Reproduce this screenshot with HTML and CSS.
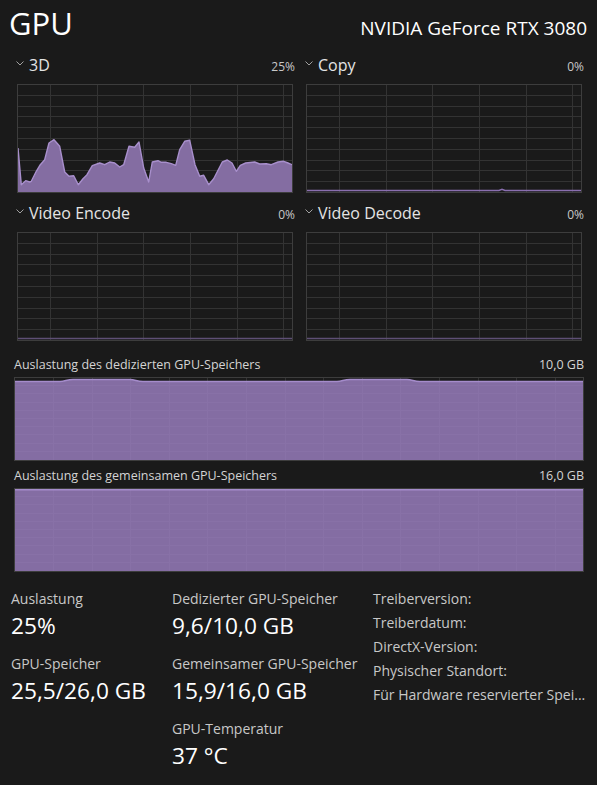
FILE: index.html
```html
<!DOCTYPE html>
<html lang="de">
<head>
<meta charset="utf-8">
<title>GPU</title>
<link rel="stylesheet" href="styles.css">
</head>
<body>
<div class="page">
  <header class="top">
    <h1 class="title">GPU</h1>
    <div class="model">NVIDIA GeForce RTX 3080</div>
  </header>

  <section class="engines">
    <div class="panel">
      <div class="phead">
        <span class="pname"><svg class="chev" width="8" height="5" viewBox="0 0 8 5"><polyline points="0.5,0.5 4,4 7.5,0.5"/></svg>3D</span>
        <span class="pval">25%</span>
      </div>
      <div class="graph">
        <svg class="gsvg">
          <g class="grid">
            <line x1="0" x2="100%" y1="10.5" y2="10.5"/><line x1="0" x2="100%" y1="21.5" y2="21.5"/><line x1="0" x2="100%" y1="31.5" y2="31.5"/><line x1="0" x2="100%" y1="42.5" y2="42.5"/><line x1="0" x2="100%" y1="53.5" y2="53.5"/><line x1="0" x2="100%" y1="64.5" y2="64.5"/><line x1="0" x2="100%" y1="75.5" y2="75.5"/><line x1="0" x2="100%" y1="85.5" y2="85.5"/><line x1="0" x2="100%" y1="96.5" y2="96.5"/>
            <line y1="0" y2="100%" x1="32.5" x2="32.5"/><line y1="0" y2="100%" x1="79.5" x2="79.5"/><line y1="0" y2="100%" x1="125.5" x2="125.5"/><line y1="0" y2="100%" x1="172.5" x2="172.5"/><line y1="0" y2="100%" x1="219.5" x2="219.5"/><line y1="0" y2="100%" x1="265.5" x2="265.5"/>
          </g>
          <path class="area" d="M0,107 L0,63 L3.3,99.7 L7.7,95.7 L11.7,97 L13.3,96.3 L18.3,86.3 L22.3,79.7 L26.7,74.7 L31,58 L36,54.7 L41.7,61.3 L46.7,87 L51,91.3 L55.7,90.7 L60.3,99.7 L65,93.7 L69,89.7 L74.3,80.7 L81.7,78 L86.7,79.7 L91.7,77 L96.7,78 L101.7,82 L105.7,79.7 L111,61.3 L116.7,62.3 L121,57 L125.7,83 L130.7,97 L134.3,77 L140,75.7 L143.3,77.3 L148.3,77.3 L153.3,78.7 L157.7,80.3 L161.7,64.7 L166.7,56.3 L171.7,55.3 L177,79.7 L181.7,91.3 L185.7,90.3 L190.7,99.7 L195.7,93.7 L204.3,77 L209.3,75 L214,78 L218.3,86.3 L222.3,80.3 L227.7,78 L236.7,77 L241.7,79 L248.3,78.7 L253.3,79.7 L260,77 L265.7,76.3 L270,78 L274,79.7 L274,107 Z"/>
          <path class="line" d="M0,63 L3.3,99.7 L7.7,95.7 L11.7,97 L13.3,96.3 L18.3,86.3 L22.3,79.7 L26.7,74.7 L31,58 L36,54.7 L41.7,61.3 L46.7,87 L51,91.3 L55.7,90.7 L60.3,99.7 L65,93.7 L69,89.7 L74.3,80.7 L81.7,78 L86.7,79.7 L91.7,77 L96.7,78 L101.7,82 L105.7,79.7 L111,61.3 L116.7,62.3 L121,57 L125.7,83 L130.7,97 L134.3,77 L140,75.7 L143.3,77.3 L148.3,77.3 L153.3,78.7 L157.7,80.3 L161.7,64.7 L166.7,56.3 L171.7,55.3 L177,79.7 L181.7,91.3 L185.7,90.3 L190.7,99.7 L195.7,93.7 L204.3,77 L209.3,75 L214,78 L218.3,86.3 L222.3,80.3 L227.7,78 L236.7,77 L241.7,79 L248.3,78.7 L253.3,79.7 L260,77 L265.7,76.3 L270,78 L274,79.7"/>
        </svg>
      </div>
    </div>

    <div class="panel">
      <div class="phead">
        <span class="pname"><svg class="chev" width="8" height="5" viewBox="0 0 8 5"><polyline points="0.5,0.5 4,4 7.5,0.5"/></svg>Copy</span>
        <span class="pval">0%</span>
      </div>
      <div class="graph">
        <svg class="gsvg">
          <g class="grid">
            <line x1="0" x2="100%" y1="10.5" y2="10.5"/><line x1="0" x2="100%" y1="21.5" y2="21.5"/><line x1="0" x2="100%" y1="31.5" y2="31.5"/><line x1="0" x2="100%" y1="42.5" y2="42.5"/><line x1="0" x2="100%" y1="53.5" y2="53.5"/><line x1="0" x2="100%" y1="64.5" y2="64.5"/><line x1="0" x2="100%" y1="75.5" y2="75.5"/><line x1="0" x2="100%" y1="85.5" y2="85.5"/><line x1="0" x2="100%" y1="96.5" y2="96.5"/>
            <line y1="0" y2="100%" x1="32.5" x2="32.5"/><line y1="0" y2="100%" x1="79.5" x2="79.5"/><line y1="0" y2="100%" x1="125.5" x2="125.5"/><line y1="0" y2="100%" x1="172.5" x2="172.5"/><line y1="0" y2="100%" x1="219.5" x2="219.5"/><line y1="0" y2="100%" x1="265.5" x2="265.5"/>
          </g>
          <path class="base bright" d="M0,105.5 H192 L195,104.3 L198,105.5 H280"/>
        </svg>
      </div>
    </div>

    <div class="panel">
      <div class="phead">
        <span class="pname"><svg class="chev" width="8" height="5" viewBox="0 0 8 5"><polyline points="0.5,0.5 4,4 7.5,0.5"/></svg>Video Encode</span>
        <span class="pval">0%</span>
      </div>
      <div class="graph">
        <svg class="gsvg">
          <g class="grid">
            <line x1="0" x2="100%" y1="10.5" y2="10.5"/><line x1="0" x2="100%" y1="21.5" y2="21.5"/><line x1="0" x2="100%" y1="31.5" y2="31.5"/><line x1="0" x2="100%" y1="42.5" y2="42.5"/><line x1="0" x2="100%" y1="53.5" y2="53.5"/><line x1="0" x2="100%" y1="64.5" y2="64.5"/><line x1="0" x2="100%" y1="75.5" y2="75.5"/><line x1="0" x2="100%" y1="85.5" y2="85.5"/><line x1="0" x2="100%" y1="96.5" y2="96.5"/>
            <line y1="0" y2="100%" x1="32.5" x2="32.5"/><line y1="0" y2="100%" x1="79.5" x2="79.5"/><line y1="0" y2="100%" x1="125.5" x2="125.5"/><line y1="0" y2="100%" x1="172.5" x2="172.5"/><line y1="0" y2="100%" x1="219.5" x2="219.5"/><line y1="0" y2="100%" x1="265.5" x2="265.5"/>
          </g>
          <path class="base" d="M0,105.5 H280"/>
        </svg>
      </div>
    </div>

    <div class="panel">
      <div class="phead">
        <span class="pname"><svg class="chev" width="8" height="5" viewBox="0 0 8 5"><polyline points="0.5,0.5 4,4 7.5,0.5"/></svg>Video Decode</span>
        <span class="pval">0%</span>
      </div>
      <div class="graph">
        <svg class="gsvg">
          <g class="grid">
            <line x1="0" x2="100%" y1="10.5" y2="10.5"/><line x1="0" x2="100%" y1="21.5" y2="21.5"/><line x1="0" x2="100%" y1="31.5" y2="31.5"/><line x1="0" x2="100%" y1="42.5" y2="42.5"/><line x1="0" x2="100%" y1="53.5" y2="53.5"/><line x1="0" x2="100%" y1="64.5" y2="64.5"/><line x1="0" x2="100%" y1="75.5" y2="75.5"/><line x1="0" x2="100%" y1="85.5" y2="85.5"/><line x1="0" x2="100%" y1="96.5" y2="96.5"/>
            <line y1="0" y2="100%" x1="32.5" x2="32.5"/><line y1="0" y2="100%" x1="79.5" x2="79.5"/><line y1="0" y2="100%" x1="125.5" x2="125.5"/><line y1="0" y2="100%" x1="172.5" x2="172.5"/><line y1="0" y2="100%" x1="219.5" x2="219.5"/><line y1="0" y2="100%" x1="265.5" x2="265.5"/>
          </g>
          <path class="base" d="M0,105.5 H280"/>
        </svg>
      </div>
    </div>
  </section>

  <section class="mem">
    <div class="mhead"><span>Auslastung des dedizierten GPU-Speichers</span><span>10,0 GB</span></div>
    <div class="mgraph">
      <svg class="msvg">
        <g class="grid">
          <line x1="0" x2="100%" y1="7.5" y2="7.5"/><line x1="0" x2="100%" y1="15.5" y2="15.5"/><line x1="0" x2="100%" y1="24.5" y2="24.5"/><line x1="0" x2="100%" y1="32.5" y2="32.5"/><line x1="0" x2="100%" y1="40.5" y2="40.5"/><line x1="0" x2="100%" y1="48.5" y2="48.5"/><line x1="0" x2="100%" y1="56.5" y2="56.5"/><line x1="0" x2="100%" y1="65.5" y2="65.5"/><line x1="0" x2="100%" y1="73.5" y2="73.5"/>
          <line y1="0" y2="100%" x1="38.5" x2="38.5"/><line y1="0" y2="100%" x1="77.5" x2="77.5"/><line y1="0" y2="100%" x1="115.5" x2="115.5"/><line y1="0" y2="100%" x1="154.5" x2="154.5"/><line y1="0" y2="100%" x1="192.5" x2="192.5"/><line y1="0" y2="100%" x1="231.5" x2="231.5"/><line y1="0" y2="100%" x1="270.5" x2="270.5"/><line y1="0" y2="100%" x1="308.5" x2="308.5"/><line y1="0" y2="100%" x1="347.5" x2="347.5"/><line y1="0" y2="100%" x1="385.5" x2="385.5"/><line y1="0" y2="100%" x1="424.5" x2="424.5"/><line y1="0" y2="100%" x1="463.5" x2="463.5"/><line y1="0" y2="100%" x1="501.5" x2="501.5"/><line y1="0" y2="100%" x1="540.5" x2="540.5"/>
        </g>
        <path class="marea" d="M0,3.5 L45,3.5 C50,3.5 52,1.5 58,1.5 L115,1.5 C120,1.5 122,3.5 128,3.5 L322,3.5 C327,3.5 329,1.5 335,1.5 L392,1.5 C397,1.5 399,3.5 405,3.5 L580,3.5 L580,82 L0,82 Z"/>
        <path class="mline" d="M0,3.5 L45,3.5 C50,3.5 52,1.5 58,1.5 L115,1.5 C120,1.5 122,3.5 128,3.5 L322,3.5 C327,3.5 329,1.5 335,1.5 L392,1.5 C397,1.5 399,3.5 405,3.5 L580,3.5"/>
      </svg>
    </div>
    <div class="mhead"><span>Auslastung des gemeinsamen GPU-Speichers</span><span>16,0 GB</span></div>
    <div class="mgraph">
      <svg class="msvg">
        <g class="grid">
          <line x1="0" x2="100%" y1="7.5" y2="7.5"/><line x1="0" x2="100%" y1="15.5" y2="15.5"/><line x1="0" x2="100%" y1="24.5" y2="24.5"/><line x1="0" x2="100%" y1="32.5" y2="32.5"/><line x1="0" x2="100%" y1="40.5" y2="40.5"/><line x1="0" x2="100%" y1="48.5" y2="48.5"/><line x1="0" x2="100%" y1="56.5" y2="56.5"/><line x1="0" x2="100%" y1="65.5" y2="65.5"/><line x1="0" x2="100%" y1="73.5" y2="73.5"/>
          <line y1="0" y2="100%" x1="38.5" x2="38.5"/><line y1="0" y2="100%" x1="77.5" x2="77.5"/><line y1="0" y2="100%" x1="115.5" x2="115.5"/><line y1="0" y2="100%" x1="154.5" x2="154.5"/><line y1="0" y2="100%" x1="192.5" x2="192.5"/><line y1="0" y2="100%" x1="231.5" x2="231.5"/><line y1="0" y2="100%" x1="270.5" x2="270.5"/><line y1="0" y2="100%" x1="308.5" x2="308.5"/><line y1="0" y2="100%" x1="347.5" x2="347.5"/><line y1="0" y2="100%" x1="385.5" x2="385.5"/><line y1="0" y2="100%" x1="424.5" x2="424.5"/><line y1="0" y2="100%" x1="463.5" x2="463.5"/><line y1="0" y2="100%" x1="501.5" x2="501.5"/><line y1="0" y2="100%" x1="540.5" x2="540.5"/>
        </g>
        <path class="marea" d="M0,0 L580,0 L580,82 L0,82 Z"/>
        <path class="mline" d="M0,0.8 L580,0.8"/>
      </svg>
    </div>
  </section>

  <section class="stats">
    <div class="col">
      <div class="stat"><div class="label">Auslastung</div><div class="value">25%</div></div>
      <div class="stat"><div class="label">GPU-Speicher</div><div class="value">25,5/26,0 GB</div></div>
    </div>
    <div class="col">
      <div class="stat"><div class="label">Dedizierter GPU-Speicher</div><div class="value">9,6/10,0 GB</div></div>
      <div class="stat"><div class="label">Gemeinsamer GPU-Speicher</div><div class="value">15,9/16,0 GB</div></div>
      <div class="stat"><div class="label">GPU-Temperatur</div><div class="value">37 °C</div></div>
    </div>
    <div class="info">
      <div>Treiberversion:</div>
      <div>Treiberdatum:</div>
      <div>DirectX-Version:</div>
      <div>Physischer Standort:</div>
      <div>Für Hardware reservierter Spei...</div>
    </div>
  </section>
</div>
</body>
</html>
```

FILE: styles.css
```css
* {
  box-sizing: border-box;
}

body {
  margin: 0;
  background: #1a1a1a;
  color: #ffffff;
  font-family: "Open Sans", "Noto Sans", sans-serif;
}

.page {
  width: 597px;
  height: 785px;
  overflow: hidden;
}

/* header */
.top {
  display: flex;
  justify-content: space-between;
  align-items: baseline;
  height: 43px;
  padding: 3px 10px 0 9px;
}

.title {
  margin: 0;
  font-size: 31px;
  font-weight: 400;
  line-height: 40px;
}

.model {
  font-size: 19px;
  line-height: 40px;
}

/* engine graphs */
.engines {
  display: grid;
  grid-template-columns: 280px 280px;
  column-gap: 9px;
  row-gap: 11px;
  padding: 13px 13px 0 15px;
}

.phead {
  display: flex;
  justify-content: space-between;
  align-items: baseline;
  height: 18px;
  line-height: 18px;
  margin-bottom: 10px;
}

.pname {
  font-size: 16px;
  color: #e4e4e4;
}

.chev {
  width: 8px;
  height: 5px;
  margin: 0 5px 0 1px;
  vertical-align: 5px;
}

.chev polyline {
  fill: none;
  stroke: #a0a0a0;
  stroke-width: 1;
}

.pval {
  font-size: 12px;
  color: #c8c8c8;
}

.graph {
  height: 109px;
  margin: 0 2px;
  border: 1px solid #3d3d3d;
}

.gsvg,
.msvg {
  display: block;
  width: 100%;
  height: 100%;
}

.grid line {
  stroke: #333333;
  stroke-width: 1;
}

.area {
  fill: #846da2;
}

.line {
  fill: none;
  stroke: #a88fcc;
  stroke-width: 1.4;
  stroke-linejoin: round;
}

.base {
  fill: none;
  stroke: #5e4f75;
  stroke-width: 1.5;
}

.base.bright {
  stroke: #8a6fb0;
}

/* memory graphs */
.mem {
  padding: 16px 13px 0 14px;
}

.mhead {
  display: flex;
  justify-content: space-between;
  align-items: baseline;
  height: 16px;
  font-size: 12.5px;
  line-height: 16px;
  color: #d4d4d4;
  margin-bottom: 4px;
}

.mgraph {
  height: 84px;
  border: 1px solid #3d3d3d;
}

.mgraph + .mhead {
  margin-top: 7px;
}

.marea {
  fill: rgba(150, 123, 186, 0.86);
}

.mline {
  fill: none;
  stroke: #a58ccb;
  stroke-width: 1.5;
}

/* stats */
.stats {
  display: grid;
  grid-template-columns: 161px 201px 1fr;
  padding: 17px 13px 0 11px;
}

.stat + .stat {
  margin-top: 13px;
}

.label {
  font-size: 14px;
  line-height: 19px;
  color: #c8c8c8;
  white-space: nowrap;
}

.value {
  font-size: 22.7px;
  line-height: 30px;
  margin-top: 3px;
  white-space: nowrap;
}

.info {
  margin-top: -2px;
  font-size: 14px;
  line-height: 24px;
  color: #c8c8c8;
  white-space: nowrap;
}
```
